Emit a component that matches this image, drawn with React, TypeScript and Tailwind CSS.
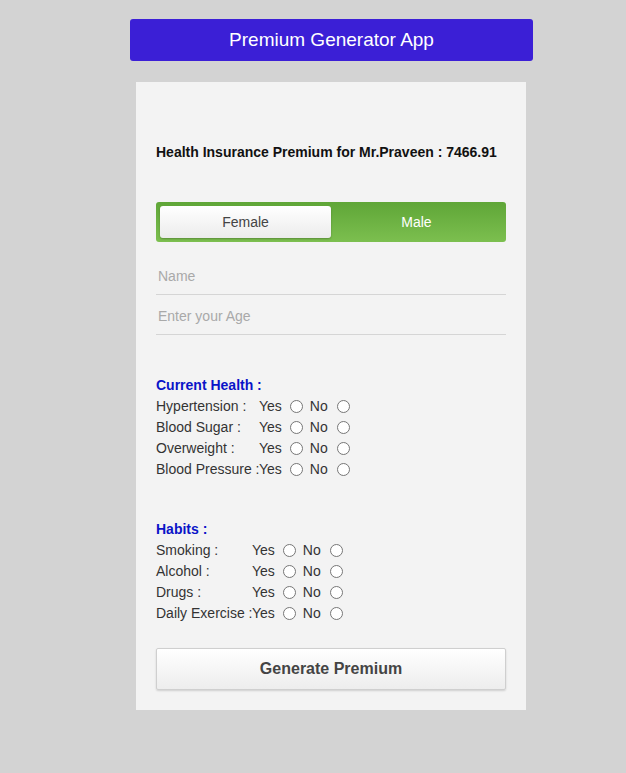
import React from "react";

const Radio = () => (
  <span className="inline-block w-[13px] h-[13px] rounded-full border border-[#767676] bg-white box-border" />
);

function Row({ label, w }: { label: string; w: string }) {
  return (
    <div className="flex items-center h-[21px] text-[14px] text-[#333] whitespace-nowrap">
      <span className={w + " shrink-0 whitespace-nowrap overflow-visible"}>{label}</span>
      <span>Yes</span>
      <span className="ml-[8px] mr-[7px] flex"><Radio /></span>
      <span>No</span>
      <span className="ml-[9px] flex"><Radio /></span>
    </div>
  );
}

export default function App() {
  return (
    <div className="min-h-[773px] bg-[#d3d3d3] pt-[19px] pb-[63px] font-['Liberation_Sans',Arial,sans-serif]">
      <div className="ml-[130px] w-[403px] h-[42px] rounded-[3px] bg-[#3b1fd6] flex items-center justify-center text-white text-[19px]">
        Premium Generator App
      </div>
      <div className="ml-[136px] mt-[21px] w-[390px] bg-[#f3f3f3] px-[20px] pt-[61px] pb-[20px]">
        <div className="text-[14px] font-bold text-[#111] leading-[18px]">
          Health Insurance Premium for Mr.Praveen : 7466.91
        </div>
        <div className="mt-[41px] h-[40px] rounded-[3px] bg-gradient-to-b from-[#5fa637] to-[#7cbf4f] p-[4px] flex">
          <div className="w-[171px] h-[32px] rounded-[3px] bg-gradient-to-b from-white to-[#ececec] shadow-[0_1px_2px_rgba(0,0,0,0.25)] flex items-center justify-center text-[14px] text-[#444]">
            Female
          </div>
          <div className="flex-1 flex items-center justify-center text-[14px] text-white">Male</div>
        </div>
        <div className="mt-[13px] h-[40px] border-b border-[#d5d5d5] flex items-center pt-[4px] px-[2px] text-[14px] text-[#a9a9a9]">
          Name
        </div>
        <div className="h-[40px] border-b border-[#d5d5d5] flex items-center pt-[4px] px-[2px] text-[14px] text-[#a9a9a9]">
          Enter your Age
        </div>
        <div className="mt-[40px] text-[14px] font-bold text-[#0a14c8] leading-[21px]">Current Health :</div>
        <Row label="Hypertension :" w="w-[103px]" />
        <Row label="Blood Sugar :" w="w-[103px]" />
        <Row label="Overweight :" w="w-[103px]" />
        <Row label="Blood Pressure :" w="w-[103px]" />
        <div className="mt-[39px] text-[14px] font-bold text-[#0a14c8] leading-[21px]">Habits :</div>
        <Row label="Smoking :" w="w-[96px]" />
        <Row label="Alcohol :" w="w-[96px]" />
        <Row label="Drugs :" w="w-[96px]" />
        <Row label="Daily Exercise :" w="w-[96px]" />
        <div className="mt-[24px] h-[42px] border border-[#cfcfcf] rounded-[2px] bg-gradient-to-b from-white to-[#ededed] shadow-[0_1px_2px_rgba(0,0,0,0.15)] flex items-center justify-center text-[16px] font-bold text-[#444]">
          Generate Premium
        </div>
      </div>
    </div>
  );
}
